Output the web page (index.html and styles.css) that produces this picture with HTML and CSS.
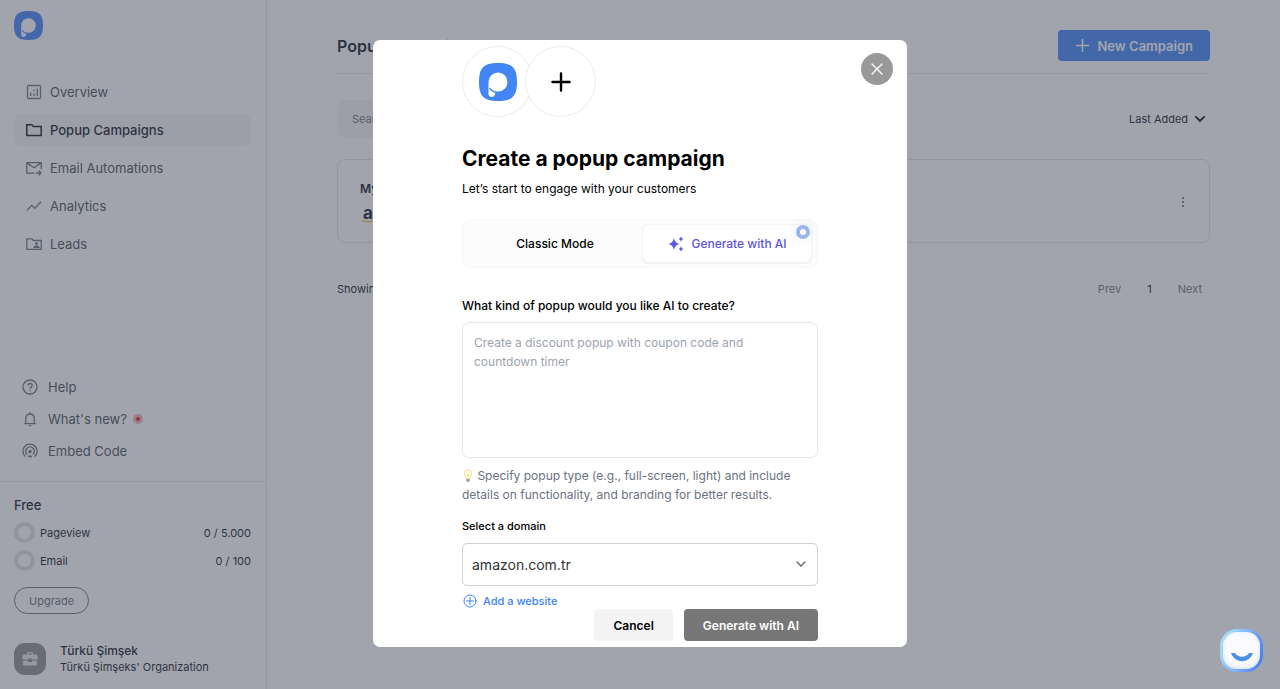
FILE: index.html
```html
<!DOCTYPE html>
<html lang="en">
<head>
	<meta charset="utf-8">
	<meta name="viewport" content="width=device-width, initial-scale=1">
	<title>Popup Campaigns</title>
	<link rel="stylesheet" href="styles.css">
</head>
<body>

<svg class="sprite" aria-hidden="true">
	<symbol id="logo" viewBox="0 0 112 112">
		<path fill="#4285f4" d="M56 0c42 0 56 14 56 56s-14 56-56 56S0 98 0 56 14 0 56 0z"/>
		<path fill="#fff" d="M28 56a28 28 0 1 1 28 28c-3 0-5 0-7-1l-2 9c-1 5-5 8-10 8s-9-4-9-9z"/>
		<path fill="none" stroke="#4285f4" stroke-width="4" d="M32 75c4 6 9 10 17 11"/>
	</symbol>
</svg>

<div class="app">
	<aside class="sidebar">
		<a href="#" class="brand" aria-label="Home"><svg width="29" height="29"><use href="#logo"/></svg></a>

		<nav class="menu">
			<a href="#">
				<svg viewBox="0 0 16 16"><rect x="1.5" y="1.5" width="13" height="13" rx="1"/><path d="M4.7 8.5V12M8 5.7v1.6M8 9.5V12M11.3 4.5V12"/></svg>
				Overview
			</a>
			<a href="#" class="active">
				<svg viewBox="0 0 16 16"><path d="M.8 13.4V2.8h5l1.6 1.7h7.8v8.9z"/></svg>
				Popup Campaigns
			</a>
			<a href="#">
				<svg viewBox="0 0 16 16"><path d="M8.5 13.2H.8V2.6h14.4v6.6M1.5 3.4 8 7.8l6.5-4.4M10 13h5M12.8 10.8l2.2 2.2-2.2 2.2"/></svg>
				Email Automations
			</a>
			<a href="#">
				<svg viewBox="0 0 16 16"><path d="M1 12.2 5.8 7.3l3 3L15 3.8"/></svg>
				Analytics
			</a>
			<a href="#">
				<svg viewBox="0 0 16 16"><path d="M.8 13.4V2.8h5l1.6 1.7h7.8v8.9z"/><circle cx="10.5" cy="7.8" r=".8"/><path d="M8 11.4c.4-1.6 4.6-1.6 5 0z"/></svg>
				Leads
			</a>
		</nav>

		<nav class="menu menu-help">
			<a href="#">
				<svg viewBox="0 0 16 16"><circle cx="8" cy="8" r="7"/><path d="M6 6.5c0-2.7 4.2-2.7 4.2 0C10.2 8 8 8.2 8 9.8M8 11v1.3"/></svg>
				Help
			</a>
			<a href="#">
				<svg viewBox="0 0 16 16"><path d="M2.2 12.6h11.6M3.8 12.6V7.2c0-5.6 8.4-5.6 8.4 0v5.4M8 1v2M6.8 14.7h2.4"/></svg>
				What's new? <i class="dot"></i>
			</a>
			<a href="#">
				<svg viewBox="0 0 16 16"><path d="M3.4 13.6a7.1 7.1 0 1 1 9.2 0M5.3 11.5a4.3 4.3 0 1 1 5.4 0"/><circle class="solid" cx="8" cy="8.5" r="1"/><path d="M6.5 14.5c0-2 3-2 3 0"/></svg>
				Embed Code
			</a>
		</nav>

		<section class="plan">
			<h2>Free</h2>
			<div class="usage"><i class="ring"></i><span>Pageview</span><b>0 / 5.000</b></div>
			<div class="usage"><i class="ring"></i><span>Email</span><b>0 / 100</b></div>
			<button type="button" class="upgrade">Upgrade</button>
		</section>

		<div class="profile">
			<span class="avatar">
				<svg width="16" height="16" viewBox="0 0 16 16"><path fill="#e5e7eb" fill-rule="evenodd" d="M5 3.5v-1C5 1.6 5.6 1 6.5 1h3c.9 0 1.5.6 1.5 1.5v1h3c.8 0 1.500.7 1.500 1.500v3.500H10v-1H6v1H.5V5c0-.8.7-1.500 1.500-1.500zM6.300 3.500h3.400V2.300H6.300zM1 9.700h5V11h4V9.700h5V13c0 .8-.7 1.500-1.500 1.500h-11C1.700 14.500 1 13.800 1 13z"/></svg>
			</span>
			<div>
				<div class="name">Türkü Şimşek</div>
				<div class="org">Türkü Şimşeks' Organization</div>
			</div>
		</div>
	</aside>

	<main class="content">
		<header class="page-head">
			<h1>Popup Campaigns</h1>
			<button type="button" class="new">
				<svg width="13" height="13" viewBox="0 0 13 13"><path d="M6.500 0v13M0 6.500h13"/></svg>
				New Campaign
			</button>
		</header>

		<div class="filters">
			<input type="search" placeholder="Search" aria-label="Search">
			<label class="sort">
				<select aria-label="Sort by"><option>Last Added</option></select>
				<svg width="10" height="7" viewBox="0 0 10 7"><path d="m1 1 4 4 4-4"/></svg>
			</label>
		</div>

		<article class="campaign">
			<div>
				<h2>My Campaign</h2>
				<span class="shop">
					a
					<svg width="12" height="3" viewBox="0 0 12 3"><path d="M0 0c3.500 2.600 8 2.600 12 0"/></svg>
				</span>
			</div>
			<button type="button" class="more" aria-label="More">
				<svg width="4" height="12" viewBox="0 0 4 12"><circle cx="2" cy="2" r="1"/><circle cx="2" cy="6" r="1"/><circle cx="2" cy="10" r="1"/></svg>
			</button>
		</article>

		<footer class="pager">
			<span>Showing 1 of 1</span>
			<nav><a href="#">Prev</a><a href="#" class="current">1</a><a href="#">Next</a></nav>
		</footer>
	</main>
</div>

<div class="overlay">
	<div class="modal" role="dialog" aria-labelledby="modal-title">
		<button type="button" class="close" aria-label="Close">
			<svg width="12" height="12" viewBox="0 0 12 12"><path d="m1 1 10 10M11 1 1 11"/></svg>
		</button>

		<div class="circles">
			<span><svg width="38" height="38"><use href="#logo"/></svg></span>
			<span><svg class="plus" width="20" height="20" viewBox="0 0 20 20"><path d="M10 1.500v17M1.500 10h17"/></svg></span>
		</div>

		<h2 id="modal-title">Create a popup campaign</h2>
		<p class="lead">Let’s start to engage with your customers</p>

		<div class="modes">
			<button type="button">Classic Mode</button>
			<button type="button" class="on">
				<svg width="18" height="18" viewBox="0 0 18 18"><path d="M7 3c.9 3.800 2.200 5.100 6 6-3.800.9-5.100 2.200-6 6-.9-3.800-2.200-5.100-6-6 3.800-.9 5.100-2.200 6-6z"/><path d="M14 1c.4 1.900 1.100 2.600 3 3-1.900.4-2.600 1.100-3 3-.4-1.900-1.100-2.600-3-3 1.900-.4 2.600-1.100 3-3zM14 11c.4 1.900 1.100 2.600 3 3-1.900.4-2.600 1.100-3 3-.4-1.900-1.100-2.600-3-3 1.900-.4 2.600-1.100 3-3z"/></svg>
				Generate with AI
				<i class="beacon"></i>
			</button>
		</div>

		<label for="prompt">What kind of popup would you like AI to create?</label>
		<textarea id="prompt" placeholder="Create a discount popup with coupon code and countdown timer"></textarea>
		<p class="hint"><svg width="12" height="14" viewBox="0 0 12 14"><path fill="#fffbea" stroke="#f5dc8c" d="M4.300 9.500C4.200 7.500 2.300 6.800 2.300 4.600a3.700 3.700 0 0 1 7.400 0c0 2.200-1.900 2.900-2 4.900z"/><path stroke="#f5dc8c" stroke-width=".8" fill="none" d="M5 5.500 6 7l1-1.500M6 7v2.500"/><path fill="#9ca3af" d="M4.200 10h3.600v1.800L7 13H5l-.8-1.200z"/></svg> Specify popup type (e.g., full-screen, light) and include details on functionality, and branding for better results.</p>

		<label for="domain" class="small">Select a domain</label>
		<div class="domain">
			<select id="domain"><option>amazon.com.tr</option></select>
			<svg width="10" height="7" viewBox="0 0 10 7"><path d="m1 1 4 4 4-4"/></svg>
		</div>
		<a href="#" class="add">
			<svg width="14" height="14" viewBox="0 0 14 14"><circle cx="7" cy="7" r="6"/><path d="M7 3.500v7M3.500 7h7"/></svg>
			Add a website
		</a>

		<div class="actions">
			<button type="button" class="cancel">Cancel</button>
			<button type="button" class="generate">Generate with AI</button>
		</div>
	</div>
</div>

<button type="button" class="chat" aria-label="Chat">
	<span><svg width="22" height="10" viewBox="0 0 22 10"><path d="M0 1h4c3 5 11 5 14 0h4c-4 11-18 11-22 0z"/></svg></span>
</button>

</body>
</html>
```
FILE: styles.css
```css
* {
	box-sizing: border-box;
}
body {
	margin: 0;
	font-family: Inter, "Liberation Sans", sans-serif;
	font-size: 12px;
	color: #111827;
	background: #fff;
}
h1, h2, p {
	margin: 0;
}
a {
	color: inherit;
	text-decoration: none;
}
button, input, select, textarea {
	margin: 0;
	font: inherit;
	color: inherit;
}
button {
	padding: 0;
	border: 0;
	background: none;
	cursor: pointer;
}
select {
	appearance: none;
	border: 0;
	background: none;
}
svg {
	flex: none;
	fill: none;
	stroke-linecap: round;
}
.sprite {
	display: none;
}
.app {
	display: flex;
	min-height: 100vh;
}

/* sidebar */
.sidebar {
	display: flex;
	flex-direction: column;
	width: 267px;
	flex: none;
	padding: 11px 0 14px;
	border-right: 1px solid #e5e7eb;
}
.brand {
	padding: 0 14px;
	height: 29px;
}
.menu {
	display: flex;
	flex-direction: column;
	gap: 6px;
	padding: 36px 15px 0 14px;
	font-size: 13px;
}
.menu a {
	display: flex;
	align-items: center;
	gap: 8px;
	height: 32px;
	padding: 0 12px;
	border-radius: 8px;
	color: #4b5056;
}
.menu svg {
	width: 16px;
	height: 16px;
	stroke: #6b7280;
	stroke-width: 1.3;
	stroke-linecap: butt;
}
.menu .active {
	background: #f5f5f5;
	color: #111827;
	font-weight: 500;
}
.menu .active svg {
	stroke: #111827;
	stroke-width: 1.5;
}
.menu .solid {
	fill: #6b7280;
}
.menu-help {
	gap: 0;
	margin-top: auto;
	padding: 0 14px 14px;
}
.menu-help a {
	gap: 10px;
	padding: 0 8px;
}
.dot {
	width: 10px;
	height: 10px;
	margin-left: -4px;
	border: 3px solid #f5b5b9;
	border-radius: 50%;
	background: #dc2626;
}
.plan {
	display: flex;
	flex-direction: column;
	gap: 7px;
	padding: 13px 15px 29px 14px;
	border-top: 1px solid #e5e7eb;
}
.plan h2 {
	font-size: 13px;
	line-height: 20px;
	font-weight: 500;
}
.usage {
	display: flex;
	align-items: center;
	gap: 5px;
	font-size: 11px;
}
.usage b {
	margin-left: auto;
	font-weight: 400;
}
.ring {
	width: 21px;
	height: 21px;
	border: 4px solid #dedfe0;
	border-radius: 50%;
}
.upgrade {
	align-self: flex-start;
	height: 27px;
	margin-top: 9px;
	padding: 0 14px;
	border: 1px solid #6b7280;
	border-radius: 14px;
	font-size: 11px;
	color: #6b7280;
}
.profile {
	display: flex;
	align-items: center;
	gap: 14px;
	padding: 0 14px;
}
.avatar {
	display: flex;
	align-items: center;
	justify-content: center;
	width: 32px;
	height: 32px;
	border-radius: 11px;
	background: #8e8e90;
}
.name {
	font-size: 12px;
	font-weight: 500;
	line-height: 16px;
}
.org {
	font-size: 11px;
	line-height: 16px;
}

/* campaign list */
.content {
	flex: 1;
	padding: 18px 70px;
}
.page-head {
	display: flex;
	align-items: center;
	justify-content: space-between;
	height: 56px;
	border-bottom: 1px solid #e5e7eb;
}
.page-head h1 {
	font-size: 16px;
	font-weight: 600;
}
.new {
	display: flex;
	align-items: center;
	gap: 9px;
	height: 31px;
	padding: 0 17px 0 18px;
	border-radius: 4px;
	background: #4285f4;
	color: #fff;
	font-size: 13px;
	font-weight: 600;
}
.new svg {
	stroke: #fff;
	stroke-width: 1.5;
}
.filters {
	display: flex;
	align-items: center;
	justify-content: space-between;
	padding: 26px 5px 21px 0;
	font-size: 11px;
}
.filters input {
	width: 240px;
	height: 38px;
	padding: 0 15px;
	border: 0;
	border-radius: 8px;
	background: #f5f5f5;
}
.filters input::placeholder {
	color: #6b7280;
}
.sort {
	display: flex;
	align-items: center;
	gap: 6px;
}
.sort select {
	padding: 0;
}
.sort svg {
	stroke: #111827;
	stroke-width: 1.8;
}
.campaign {
	display: flex;
	align-items: center;
	justify-content: space-between;
	height: 84px;
	padding: 2px 24px 0 22px;
	border: 1px solid #e0e2e5;
	border-radius: 8px;
}
.campaign h2 {
	font-size: 12px;
	line-height: 16px;
	font-weight: 600;
}
.shop {
	display: inline-flex;
	flex-direction: column;
	align-items: center;
	padding: 9px 2px 0;
	font-size: 17px;
	line-height: 14px;
	font-weight: 700;
}
.shop svg {
	stroke: #f59e0b;
}
.more svg {
	display: block;
	fill: #4b5563;
}
.pager {
	display: flex;
	justify-content: space-between;
	padding: 38px 8px 0 0;
	font-size: 11px;
	line-height: 16px;
}
.pager nav {
	display: flex;
	gap: 26px;
	color: #6b7280;
}
.pager .current {
	color: #111827;
}

/* modal */
.overlay {
	position: fixed;
	inset: 0;
	display: flex;
	align-items: flex-start;
	justify-content: center;
	padding-top: 40px;
	background: rgba(68, 73, 92, .5);
}
.modal {
	position: relative;
	width: 534px;
	max-width: 100%;
	padding: 6px 89px;
	border-radius: 7px;
	background: #fff;
	color: #000;
}
.close {
	position: absolute;
	top: 13px;
	right: 14px;
	display: flex;
	align-items: center;
	justify-content: center;
	width: 32px;
	height: 32px;
	border-radius: 50%;
	background: #999;
}
.close svg {
	stroke: #fff;
	stroke-width: 1.3;
}
.circles {
	display: flex;
}
.circles span {
	display: flex;
	align-items: center;
	justify-content: center;
	width: 71px;
	height: 71px;
	border: 1px solid #ebebeb;
	border-radius: 50%;
	background: #fff;
}
.circles span + span {
	margin-left: -8px;
}
.plus {
	stroke: #000;
	stroke-width: 2.4;
}
.modal h2 {
	margin-top: 27px;
	font-size: 21px;
	line-height: 30px;
	font-weight: 700;
}
.lead {
	margin-top: 6px;
	line-height: 18px;
}
.modes {
	display: grid;
	grid-template-columns: 1fr 170px;
	height: 49px;
	margin-top: 21px;
	padding: 4px 5px;
	border: 1px solid #f7f7f7;
	border-radius: 9px;
	background: #fcfcfc;
}
.modes button {
	display: flex;
	align-items: center;
	justify-content: center;
	gap: 6px;
	font-weight: 500;
}
.modes .on {
	position: relative;
	border: 1px solid #f3f3f3;
	border-radius: 7px;
	background: #fff;
	box-shadow: 0 1px 1px rgba(0, 0, 0, .05);
	color: #5b55e0;
}
.modes .on svg {
	fill: #5b5be6;
}
.beacon {
	position: absolute;
	top: 0;
	right: 1px;
	width: 14px;
	height: 14px;
	border: 4px solid #98b5f0;
	border-radius: 50%;
	background: #fff;
	box-shadow: 0 0 0 6px rgba(66, 133, 244, .03);
}
.modal label {
	display: block;
	margin-top: 29px;
	line-height: 18px;
	font-weight: 500;
}
.modal textarea {
	display: block;
	width: 100%;
	height: 136px;
	margin-top: 7px;
	padding: 10px 11px;
	border: 1px solid #e7e7e9;
	border-radius: 7px;
	line-height: 19px;
	resize: none;
}
.modal textarea::placeholder {
	color: #9ca3af;
}
.hint {
	margin-top: 8px;
	line-height: 19px;
	color: #6b7280;
}
.hint svg {
	vertical-align: -3px;
}
.modal .small {
	margin-top: 13px;
	font-size: 11px;
}
.domain {
	display: grid;
	align-items: center;
	margin-top: 8px;
}
.domain select,
.domain svg {
	grid-area: 1 / 1;
}
.domain select {
	width: 100%;
	height: 43px;
	padding: 0 9px;
	border: 1px solid #d1d1d3;
	border-radius: 5px;
	font-size: 14px;
	color: #333;
}
.domain svg {
	justify-self: end;
	margin-right: 12px;
	stroke: #666;
	stroke-width: 1.4;
	pointer-events: none;
}
.add {
	display: flex;
	align-items: center;
	gap: 6px;
	margin-top: 7px;
	padding-left: 1px;
	font-size: 11px;
	line-height: 16px;
	font-weight: 500;
	color: #3b82f6;
}
.add svg {
	stroke: #3b82f6;
}
.actions {
	display: flex;
	justify-content: flex-end;
	gap: 11px;
}
.actions button {
	height: 32px;
	padding: 0 19px;
	border-radius: 4px;
	font-weight: 600;
}
.cancel {
	background: #f4f4f4;
}
.actions .generate {
	background: #777;
	color: #fff;
}

/* chat launcher */
.chat {
	position: fixed;
	right: 17px;
	bottom: 17px;
	padding: 3px;
	border-radius: 17px;
	background: linear-gradient(110deg, #b9dfe2, #8fd0fa 30%, #7ba6f5 60%, #2f78e8);
}
.chat span {
	display: flex;
	align-items: flex-end;
	justify-content: center;
	width: 37px;
	height: 37px;
	padding-bottom: 7px;
	border-radius: 14px;
	background: #fafaff;
	box-shadow: inset 0 -1px 4px #d4dcf5;
}
.chat svg {
	fill: #4a90e8;
}
```
